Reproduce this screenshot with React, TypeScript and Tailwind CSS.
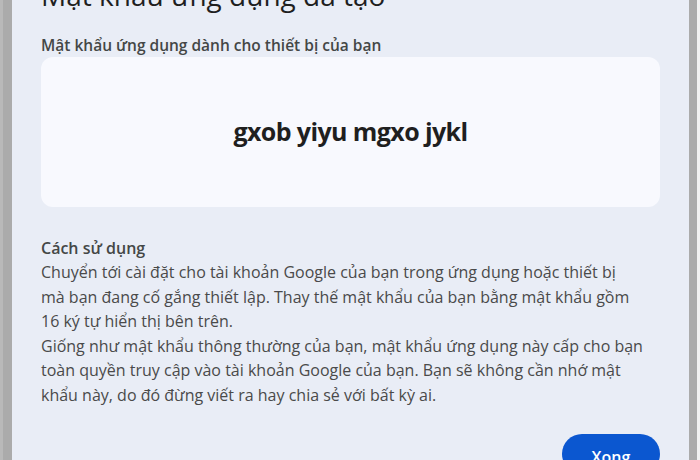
const lines = [
  "Chuyển tới cài đặt cho tài khoản Google của bạn trong ứng dụng hoặc thiết bị",
  "mà bạn đang cố gắng thiết lập. Thay thế mật khẩu của bạn bằng mật khẩu gồm",
  "16 ký tự hiển thị bên trên.",
  "Giống như mật khẩu thông thường của bạn, mật khẩu ứng dụng này cấp cho bạn",
  "toàn quyền truy cập vào tài khoản Google của bạn. Bạn sẽ không cần nhớ mật",
  "khẩu này, do đó đừng viết ra hay chia sẻ với bất kỳ ai.",
];

export default function App() {
  return (
    <div
      className="h-[460px] w-[700px] overflow-hidden bg-[#ababab] flex"
      style={{ fontFamily: "'Open Sans', 'Noto Sans', sans-serif" }}
    >
      <div className="w-[3px] bg-[#b9b9b9] shrink-0" />
      <div className="w-[9px] shrink-0" />
      <div className="w-[677px] shrink-0 bg-[#e9edf6] -mt-[23px] pl-[29px] pr-[29px] flex flex-col">
        <h1 className="shrink-0 text-[28px] leading-[36px] text-[#1f1f1f] font-normal">
          Mật khẩu ứng dụng đã tạo
        </h1>
        <div className="shrink-0 mt-[21px] text-[15.5px] leading-[22px] font-semibold text-[#444746]">
          Mật khẩu ứng dụng dành cho thiết bị của bạn
        </div>
        <div className="shrink-0 mt-[1px] h-[150px] w-[619px] rounded-[12px] bg-[#f8f9fe] flex items-center justify-center">
          <span className="text-[25px] font-bold text-[#1f1f1f] tracking-[-0.6px]">
            gxob yiyu mgxo jykl
          </span>
        </div>
        <div className="shrink-0 mt-[30px] text-[16px] leading-[22px] font-semibold text-[#444746]">
          Cách sử dụng
        </div>
        <div className="shrink-0 mt-[1px] text-[16px] leading-[24.5px] text-[#4a4a4a]">
          {lines.map((l) => (
            <div key={l} className="whitespace-nowrap">
              {l}
            </div>
          ))}
        </div>
        <div className="shrink-0 mt-[27px] flex justify-end w-[619px]">
          <button className="h-[40px] w-[98px] rounded-full bg-[#0b57d0] text-white text-[16px] font-semibold pt-[6px]">
            Xong
          </button>
        </div>
      </div>
      <div className="w-[8px] shrink-0" />
      <div className="w-[3px] bg-[#f2f2f2] shrink-0" />
    </div>
  );
}
